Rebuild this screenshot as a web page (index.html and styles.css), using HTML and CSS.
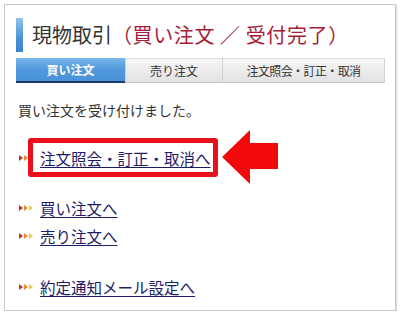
FILE: index.html
```html
<!DOCTYPE html>
<html lang="ja">
<head>
<meta charset="utf-8">
<link rel="stylesheet" href="styles.css">
</head>
<body>
<div class="frame">
  <h1 class="title"><span class="title-bar"></span><span class="title-main">現物取引</span><span class="title-status">（買い注文 ／ 受付完了）</span></h1>
  <div class="tabs">
    <div class="tab tab-active">買い注文</div>
    <div class="tab tab-sell">売り注文</div>
    <div class="tab tab-inquiry">注文照会・訂正・取消</div>
  </div>
  <p class="msg">買い注文を受け付けました。</p>
  <div class="link-row row-first">
    <span class="bullet"><i class="t1"></i><i class="t2"></i><i class="t3"></i></span>
    <a class="link" href="#">注文照会・訂正・取消へ</a>
    <span class="annot-box"></span>
    <svg class="annot-arrow" width="56" height="54" viewBox="0 0 56 54"><polygon points="0,27 28,0 28,13 56,13 56,39 28,39 28,54" fill="#f20a0a"/></svg>
  </div>
  <div class="link-row row-buy">
    <span class="bullet"><i class="t1"></i><i class="t2"></i><i class="t3"></i></span>
    <a class="link" href="#">買い注文へ</a>
  </div>
  <div class="link-row row-sell">
    <span class="bullet"><i class="t1"></i><i class="t2"></i><i class="t3"></i></span>
    <a class="link" href="#">売り注文へ</a>
  </div>
  <div class="link-row row-mail">
    <span class="bullet"><i class="t1"></i><i class="t2"></i><i class="t3"></i></span>
    <a class="link" href="#">約定通知メール設定へ</a>
  </div>
</div>
</body>
</html>
```

FILE: styles.css
```css
html, body {
  margin: 0;
  background: #ffffff;
}
body {
  padding: 4px 0 0 4px;
  font-family: "Noto Sans CJK JP", "Noto Sans", sans-serif;
  color: #333333;
}
.frame {
  box-sizing: border-box;
  width: 392px;
  height: 307px;
  border: 1px solid #c9c9c9;
  box-shadow: 1px 1px 1px #dddddd;
  padding: 13px 0 0 11px;
  background: #ffffff;
}
.title {
  display: flex;
  align-items: center;
  height: 34px;
  margin: 0;
  font-size: 20px;
  font-weight: normal;
  line-height: 34px;
}
.title-bar {
  width: 7px;
  height: 34px;
  margin-right: 9px;
  background: linear-gradient(#93c3ec, #4a92d6 60%, #3b83cc);
}
.title-main {
  color: #333333;
}
.title-status {
  color: #a51d36;
  letter-spacing: 0.6px;
}
.tabs {
  display: flex;
  width: 369px;
  height: 25px;
  margin-top: 6px;
  font-size: 12px;
  line-height: 23px;
}
.tab {
  box-sizing: border-box;
  height: 25px;
  text-align: center;
  background: linear-gradient(#f6f6f6, #e2e2e2);
  border-top: 1px solid #e0e0e0;
  border-left: 1px solid #d2d2d2;
  border-bottom: 1px solid #c4c4c4;
  color: #333333;
}
.tab-active {
  width: 109px;
  border: none;
  border-bottom: 2px solid #1d3b68;
  background: linear-gradient(#78b5ea, #5199dc 50%, #4a92d7);
  color: #ffffff;
  font-weight: bold;
  line-height: 23px;
}
.tab-sell {
  width: 97px;
}
.tab-inquiry {
  width: 163px;
  border-right: 1px solid #d2d2d2;
  letter-spacing: -0.6px;
}
.msg {
  margin: 17px 0 0 2px;
  font-size: 14px;
  line-height: 20px;
}
.link-row {
  position: relative;
  display: flex;
  align-items: center;
  height: 20px;
  font-size: 15.5px;
  line-height: 20px;
}
.row-first { margin-top: 28px; }
.row-buy { margin-top: 30px; }
.row-sell { margin-top: 8px; }
.row-mail { margin-top: 31px; }
.bullet {
  display: flex;
  gap: 1px;
  width: 15px;
  margin-left: 3px;
  margin-right: 6px;
}
.bullet i {
  width: 0;
  height: 0;
  border-top: 3px solid transparent;
  border-bottom: 3px solid transparent;
  border-left: 4px solid #c83030;
}
.bullet .t2 { border-left-color: #e8882c; }
.bullet .t3 { border-left-color: #f0cc3c; }
.link {
  color: #1c1c68;
  text-decoration: underline;
  text-underline-offset: 2px;
}
.annot-box {
  position: absolute;
  left: 12px;
  top: -10px;
  box-sizing: border-box;
  width: 190px;
  height: 39px;
  border: 5px solid #e8101a;
  border-radius: 3px;
}
.annot-arrow {
  position: absolute;
  left: 206px;
  top: -18px;
}
```
